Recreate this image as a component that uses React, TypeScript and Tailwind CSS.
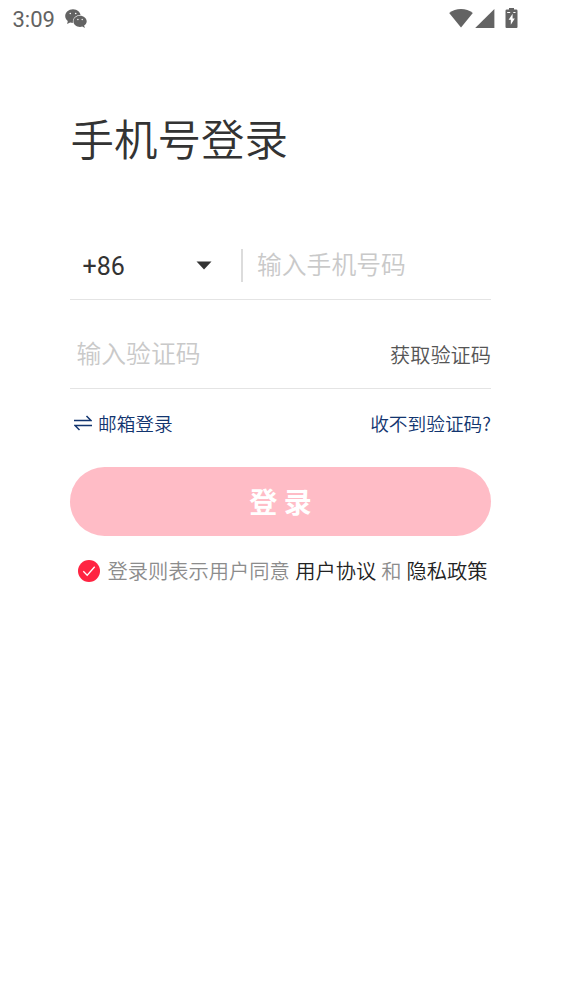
function StatusBar() {
  return (
    <header className="flex h-[38px] items-center pl-[12.5px] pr-[43px] text-[#636363]">
      <span className="pt-px font-[Roboto] text-[22px] font-normal leading-none">3:09</span>
      <svg className="ml-[10px]" width="22" height="20" viewBox="0 0 22 20" fill="currentColor">
        <path d="M8 .2C3.600.2.2 3.200.2 7c0 2 1 3.800 2.600 5l-.7 3 3-1.600c.9.300 1.900.4 2.900.4 4.300 0 7.700-3 7.700-6.800S12.300.2 8 .2Z" />
        <path d="M15 6.700c-3.700 0-6.600 2.500-6.600 5.600s2.900 5.600 6.600 5.600c.8 0 1.600-.1 2.300-.4l2.600 1.500-.8-2.400c1.600-1 2.600-2.600 2.600-4.300 0-3.100-3-5.600-6.700-5.600Z" stroke="white" strokeWidth="1.200" paintOrder="stroke" />
        <g fill="white">
          <circle cx="5.300" cy="4.500" r=".8" />
          <circle cx="10.700" cy="4.500" r=".8" />
          <circle cx="12.900" cy="10.500" r=".7" />
          <circle cx="17.200" cy="10.500" r=".7" />
        </g>
      </svg>
      <div className="ml-auto flex items-center">
        <svg width="24" height="20" viewBox="0 0 24 20" fill="currentColor">
          <path d="M12 18.500.2 4C3.500 1.300 7.600 0 12 0S20.500 1.300 23.800 4Z" />
        </svg>
        <svg className="ml-[2px]" width="20" height="20" viewBox="0 0 20 20" fill="currentColor">
          <path d="M19.400 0V19H.2Z" />
        </svg>
        <svg className="ml-[10px] overflow-visible" width="13" height="20" viewBox="0 0 13 20" fill="currentColor">
          <path d="M4-1h5v1.500h2.200q1.300 0 1.300 1.300v16.200q0 1-1 1H1.500q-1 0-1-1V1.800q0-1.300 1.300-1.300H4Z" />
          <path d="M2.200 3.500h3M8.300 3.500h2.200" stroke="white" strokeWidth="1" />
          <path d="M7.600 4.700 3.600 10.800h2.200v5l4-6.200H7.600Z" fill="white" />
        </svg>
      </div>
    </header>
  );
}

export default function App() {
  return (
    <div className="min-h-[999px] w-full bg-white font-['Noto_Sans_CJK_SC',sans-serif] font-[350] text-[#333]">
      <StatusBar />
      <main className="mx-[70px] pt-[69px]">
        <h1 className="h-[64px] whitespace-nowrap pl-[0.5px] text-[43.5px] font-[350] leading-[62px]">手机号登录</h1>

        <div className="mt-[60px] flex h-[69px] items-center border-b border-[#e4e4e4]">
          <button className="flex w-[142px] items-center justify-between pl-[12.5px]">
            <span className="pt-[4px] font-[Roboto] text-[25px] font-normal leading-[30px]">+86</span>
            <svg width="16" height="9" viewBox="0 0 16 9" fill="currentColor">
              <path d="M.5.500h15L8 8.500Z" />
            </svg>
          </button>
          <span className="ml-[29px] h-[33px] w-[2px] bg-[#dcdcdc]" />
          <span className="ml-[14px] pb-[5px] text-[24.8px] leading-[36px] text-[#c9c9c9]">输入手机号码</span>
        </div>

        <div className="flex h-[89px] items-center justify-between border-b border-[#e4e4e4]">
          <span className="ml-[6.5px] pt-[16px] text-[24.8px] leading-[36px] text-[#c9c9c9]">输入验证码</span>
          <button className="pt-[22px] text-[20.2px] leading-[30px] text-[#555]">获取验证码</button>
        </div>

        <div className="mt-[19px] flex h-[30px] items-center justify-between text-[18.7px] leading-[30px] text-[#12356f]">
          <button className="flex items-center gap-[6px] pl-[4px]">
            <svg width="18" height="16" viewBox="0 0 18 16" fill="none" stroke="currentColor" strokeWidth="1.500">
              <path d="M0 5.500h17L12.500 1M18 10.500H1l4.500 4.500" />
            </svg>
            邮箱登录
          </button>
          <button>收不到验证码?</button>
        </div>

        <button className="mt-[29px] flex h-[69px] w-full items-center justify-center rounded-full bg-[#ffbcc6] pb-[2px] text-[28px] font-bold leading-[40px] text-white">
          登&nbsp;录
        </button>

        <div className="mt-[20px] flex h-[30px] items-center whitespace-nowrap pl-[8px] text-[20.25px] leading-[30px] text-[#8c8c8c]">
          <svg width="22" height="22" viewBox="0 0 22 22">
            <circle cx="11" cy="11" r="11" fill="#ff2442" />
            <path d="m5.300 11.200 3.900 4 7.500-8.400" fill="none" stroke="white" strokeWidth="1.300" />
          </svg>
          <span className="ml-[7.500px]">登录则表示用户同意</span>
          <span className="ml-[5.500px] text-[#222]">用户协议</span>
          <span className="ml-[5px]">和</span>
          <span className="ml-[5px] text-[#222]">隐私政策</span>
        </div>
      </main>
    </div>
  );
}
